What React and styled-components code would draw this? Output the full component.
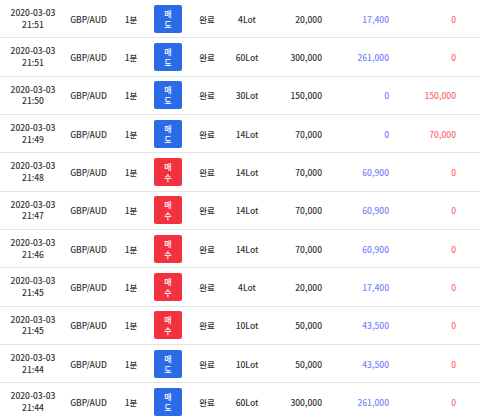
import React from 'react';
import styled, { createGlobalStyle } from 'styled-components';

const GlobalStyle = createGlobalStyle`
  body {
    margin: 0;
    background: #ffffff;
    font-family: "Noto Sans CJK KR", "Noto Sans", sans-serif;
  }
`;

const trades = [
  { date: '2020-03-03', time: '21:51', side: 'sell', lot: '4Lot', amount: '20,000', profit: '17,400', loss: '0' },
  { date: '2020-03-03', time: '21:51', side: 'sell', lot: '60Lot', amount: '300,000', profit: '261,000', loss: '0' },
  { date: '2020-03-03', time: '21:50', side: 'sell', lot: '30Lot', amount: '150,000', profit: '0', loss: '150,000' },
  { date: '2020-03-03', time: '21:49', side: 'sell', lot: '14Lot', amount: '70,000', profit: '0', loss: '70,000' },
  { date: '2020-03-03', time: '21:48', side: 'buy', lot: '14Lot', amount: '70,000', profit: '60,900', loss: '0' },
  { date: '2020-03-03', time: '21:47', side: 'buy', lot: '14Lot', amount: '70,000', profit: '60,900', loss: '0' },
  { date: '2020-03-03', time: '21:46', side: 'buy', lot: '14Lot', amount: '70,000', profit: '60,900', loss: '0' },
  { date: '2020-03-03', time: '21:45', side: 'buy', lot: '4Lot', amount: '20,000', profit: '17,400', loss: '0' },
  { date: '2020-03-03', time: '21:45', side: 'buy', lot: '10Lot', amount: '50,000', profit: '43,500', loss: '0' },
  { date: '2020-03-03', time: '21:44', side: 'sell', lot: '10Lot', amount: '50,000', profit: '43,500', loss: '0' },
  { date: '2020-03-03', time: '21:44', side: 'sell', lot: '60Lot', amount: '300,000', profit: '261,000', loss: '0' },
];

const App = () => {
  return (
    <>
      <GlobalStyle />
      <List>
        {trades.map((t, i) => (
          <Row key={i}>
            <DateCell>
              <span>{t.date}</span>
              <span>{t.time}</span>
            </DateCell>
            <Cell>GBP/AUD</Cell>
            <Cell>1분</Cell>
            <Cell>
              <SideBadge side={t.side}>
                <span>매</span>
                <span>{t.side === 'sell' ? '도' : '수'}</span>
              </SideBadge>
            </Cell>
            <Cell>완료</Cell>
            <Cell>{t.lot}</Cell>
            <NumCell>{t.amount}</NumCell>
            <NumCell tone="blue">{t.profit}</NumCell>
            <NumCell tone="red">{t.loss}</NumCell>
          </Row>
        ))}
      </List>
    </>
  );
};

export default App;


const List = styled.div`
  width: 480px;
`;

const Row = styled.div`
  display: grid;
  grid-template-columns: 66px 45px 40px 34px 44px 36px 57px 67px 67px 1fr;
  align-items: center;
  height: 38.33px;
  box-sizing: border-box;
  border-bottom: 1px solid #e4e4e4;
  font-size: 8.5px;
  font-weight: 500;
  color: #333333;
`;

const Cell = styled.div`
  display: flex;
  justify-content: center;
  align-items: center;
`;

const DateCell = styled.div`
  display: flex;
  flex-direction: column;
  align-items: center;
  line-height: 11.5px;
`;

const NumCell = styled.div`
  text-align: right;
  color: ${p => (p.tone === 'blue' ? '#7386fb' : p.tone === 'red' ? '#fb6d6d' : '#333333')};
`;

const SideBadge = styled.div`
  width: 28px;
  height: 28px;
  border-radius: 2px;
  display: flex;
  flex-direction: column;
  align-items: center;
  justify-content: center;
  font-size: 8px;
  line-height: 11px;
  color: #ffffff;
  background: ${p => (p.side === 'sell' ? '#2c6be8' : '#f2323f')};
`;
